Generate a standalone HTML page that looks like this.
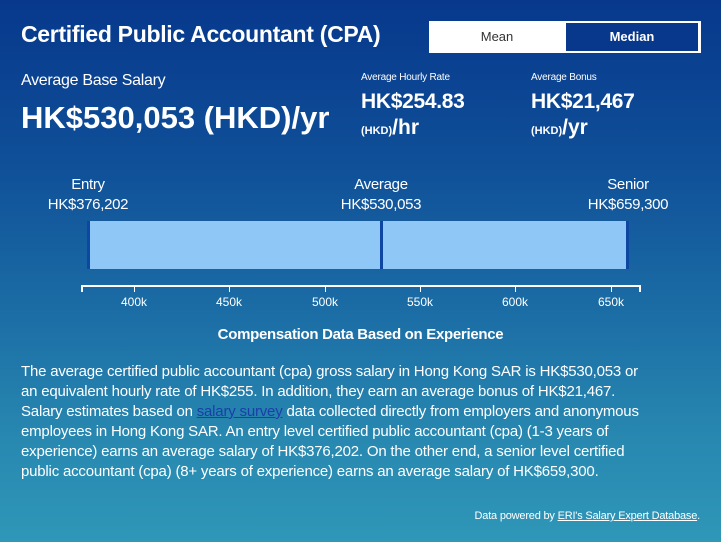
<!DOCTYPE html>
<html><head><style>
body{margin:0;width:721px;height:542px;overflow:hidden;font-family:"Liberation Sans",Arial,sans-serif;color:#fff;
background:linear-gradient(180deg,#07388c 0%,#0f4f98 30%,#1a6aa4 55%,#2787b0 80%,#2f97b8 100%);position:relative}
.a{position:absolute;white-space:nowrap}
</style></head><body>
<div class="a" style="left:21px;top:21px;font-size:23px;font-weight:bold;letter-spacing:-0.3px">Certified Public Accountant (CPA)</div>
<div class="a" style="left:429px;top:21px;width:272px;height:32px;background:#fff;">
  <div class="a" style="left:0;top:0;width:136px;height:32px;line-height:32px;text-align:center;color:#333;font-size:13px">Mean</div>
  <div class="a" style="left:137px;top:2px;width:132px;height:28px;line-height:28px;text-align:center;background:#07388c;font-size:13px;font-weight:bold">Median</div>
</div>
<div class="a" style="left:21px;top:72px;font-size:16px;letter-spacing:-0.3px">Average Base Salary</div>
<div class="a" style="left:21px;top:100px;font-size:31px;font-weight:bold">HK$530,053 (HKD)/yr</div>
<div class="a" style="left:361px;top:72px;font-size:10px;letter-spacing:-0.2px">Average Hourly Rate</div>
<div class="a" style="left:361px;top:90px;font-size:21px;font-weight:bold;letter-spacing:-0.3px">HK$254.83</div>
<div class="a" style="left:361px;top:116px;font-size:21px;font-weight:bold"><span style="font-size:11px">(HKD)</span>/hr</div>
<div class="a" style="left:531px;top:72px;font-size:10px;letter-spacing:-0.2px">Average Bonus</div>
<div class="a" style="left:531px;top:90px;font-size:21px;font-weight:bold;letter-spacing:-0.3px">HK$21,467</div>
<div class="a" style="left:531px;top:116px;font-size:21px;font-weight:bold"><span style="font-size:11px">(HKD)</span>/yr</div>

<div class="a" style="left:38px;top:175px;width:100px;text-align:center;font-size:15px;line-height:20px;letter-spacing:-0.3px">Entry<br>HK$376,202</div>
<div class="a" style="left:331px;top:175px;width:100px;text-align:center;font-size:15px;line-height:20px;letter-spacing:-0.3px">Average<br>HK$530,053</div>
<div class="a" style="left:578px;top:175px;width:100px;text-align:center;font-size:15px;line-height:20px;letter-spacing:-0.3px">Senior<br>HK$659,300</div>

<div class="a" style="left:87px;top:221px;width:542px;height:48px;background:#8fc8f7;border-left:3px solid #0d47a1;border-right:3px solid #0d47a1;box-sizing:border-box"></div>
<div class="a" style="left:380px;top:221px;width:3px;height:48px;background:#0d47a1"></div>

<div class="a" style="left:81px;top:285px;width:560px;height:2px;background:#fff"></div>
<div class="a" style="left:81px;top:285px;width:2px;height:7px;background:#fff"></div>
<div class="a" style="left:639px;top:285px;width:2px;height:7px;background:#fff"></div>
<div class="a" style="left:134px;top:285px;width:1px;height:7px;background:#fff"></div>
<div class="a" style="left:229px;top:285px;width:1px;height:7px;background:#fff"></div>
<div class="a" style="left:325px;top:285px;width:1px;height:7px;background:#fff"></div>
<div class="a" style="left:420px;top:285px;width:1px;height:7px;background:#fff"></div>
<div class="a" style="left:515px;top:285px;width:1px;height:7px;background:#fff"></div>
<div class="a" style="left:611px;top:285px;width:1px;height:7px;background:#fff"></div>
<div class="a" style="left:114px;top:295px;width:40px;text-align:center;font-size:12px">400k</div>
<div class="a" style="left:209px;top:295px;width:40px;text-align:center;font-size:12px">450k</div>
<div class="a" style="left:305px;top:295px;width:40px;text-align:center;font-size:12px">500k</div>
<div class="a" style="left:400px;top:295px;width:40px;text-align:center;font-size:12px">550k</div>
<div class="a" style="left:495px;top:295px;width:40px;text-align:center;font-size:12px">600k</div>
<div class="a" style="left:591px;top:295px;width:40px;text-align:center;font-size:12px">650k</div>

<div class="a" style="left:0;top:326px;width:721px;text-align:center;font-size:15px;font-weight:bold;letter-spacing:-0.3px">Compensation Data Based on Experience</div>
<div class="a" style="left:21px;top:362px;font-size:15px;line-height:20px;letter-spacing:-0.2px">The average certified public accountant (cpa) gross salary in Hong Kong SAR is HK$530,053 or<br>an equivalent hourly rate of HK$255. In addition, they earn an average bonus of HK$21,467.<br>Salary estimates based on <span style="color:#1a3fa8;text-decoration:underline">salary survey</span> data collected directly from employers and anonymous<br>employees in Hong Kong SAR. An entry level certified public accountant (cpa) (1-3 years of<br>experience) earns an average salary of HK$376,202. On the other end, a senior level certified<br>public accountant (cpa) (8+ years of experience) earns an average salary of HK$659,300.</div>
<div class="a" style="right:21px;top:510px;font-size:11px;letter-spacing:-0.2px">Data powered by <span style="text-decoration:underline">ERI's Salary Expert Database</span>.</div>
</body></html>
